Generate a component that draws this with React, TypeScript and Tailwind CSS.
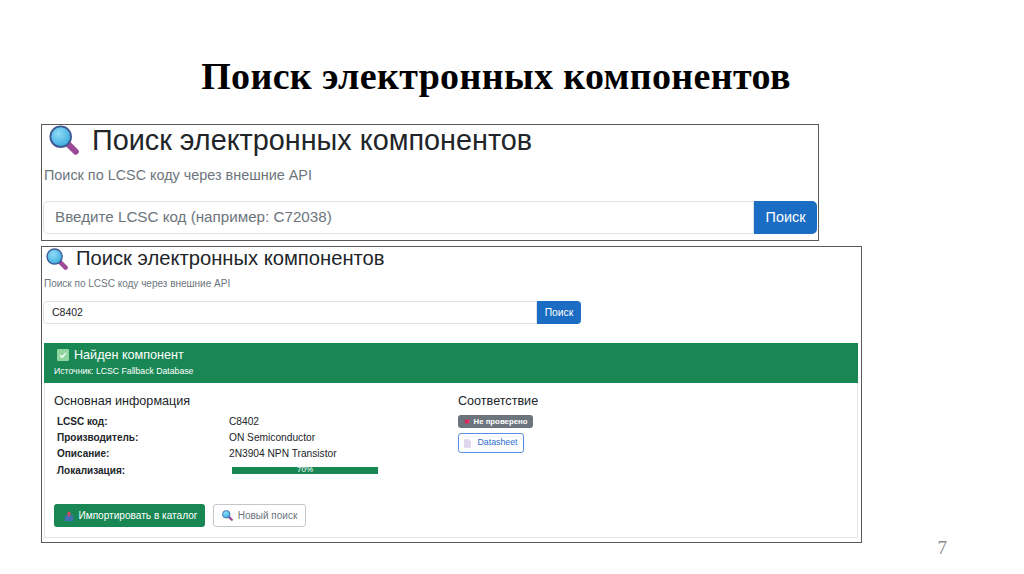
import React from 'react';

const sans = { fontFamily: '"Liberation Sans", Arial, sans-serif' };

const Magnifier: React.FC<{ className?: string }> = ({ className }) => (
  <svg viewBox="0 0 32 32" className={className}>
    <defs>
      <radialGradient id="lens" cx="40%" cy="35%" r="70%">
        <stop offset="0%" stopColor="#8fdcf5" />
        <stop offset="100%" stopColor="#38a9de" />
      </radialGradient>
    </defs>
    <line x1="20" y1="20" x2="28.5" y2="28.5" stroke="#9c4a97" strokeWidth="6.5" strokeLinecap="round" />
    <circle cx="12.5" cy="12.5" r="11" fill="url(#lens)" stroke="#3f5b94" strokeWidth="2" />
  </svg>
);

const InfoRow: React.FC<{ label: string; children: React.ReactNode }> = ({ label, children }) => (
  <div className="flex h-[16.3px] items-center">
    <div className="w-[172px] text-[10px] font-bold text-[#212529]">{label}</div>
    <div className="flex-1 text-[10.2px] text-[#212529]">{children}</div>
  </div>
);

export default function App() {
  return (
    <div className="relative h-[574px] w-[1024px] overflow-hidden bg-white" style={sans}>
      <h1
        className="flex h-[124px] items-center justify-center pr-[32px] pt-[28px] text-[38px] font-bold tracking-[0.35px] text-black"
        style={{ fontFamily: '"Liberation Serif", "Times New Roman", serif' }}
      >
        Поиск электронных компонентов
      </h1>

      <div className="ml-[41px] flex flex-col gap-[5px]">
        {/* First capture */}
        <div className="h-[117px] w-[778px] border border-[#5a5a5a] pl-[1px]">
          <div className="flex h-[33px] items-center pb-[3px] pl-[6px]">
            <Magnifier className="h-[30px] w-[30px]" />
            <span className="ml-[13px] text-[28.8px] leading-none text-[#212529]">Поиск электронных компонентов</span>
          </div>
          <p className="mt-[8px] pl-[1px] text-[14.4px] leading-[18px] text-[#6c757d]">Поиск по LCSC коду через внешние API</p>
          <div className="mt-[17px] flex h-[33px]">
            <div className="flex w-[711px] items-center rounded-l-[5px] border border-[#dee2e6] pl-[11px] text-[15.2px] text-[#6c757d]">
              Введите LCSC код (например: C72038)
            </div>
            <button className="w-[63px] rounded-r-[5px] bg-[#1a6dc2] text-[14.4px] text-white">Поиск</button>
          </div>
        </div>

        {/* Second capture */}
        <div className="h-[297px] w-[821px] border border-[#5a5a5a] pl-[1px]">
          <div className="flex h-[25px] items-center pb-[2px] pl-[3px]">
            <Magnifier className="h-[22px] w-[22px]" />
            <span className="ml-[8px] text-[20.2px] leading-none text-[#212529]">Поиск электронных компонентов</span>
          </div>
          <p className="mt-[5px] pl-[1px] text-[10px] leading-[14px] text-[#6c757d]">Поиск по LCSC коду через внешние API</p>
          <div className="mt-[10px] flex h-[23px]">
            <div className="flex w-[494px] items-center rounded-l-[4px] border border-[#dee2e6] pl-[8px] text-[10.5px] text-[#212529]">
              C8402
            </div>
            <button className="w-[44px] rounded-r-[4px] bg-[#1a6dc2] text-[10.3px] text-white">Поиск</button>
          </div>

          <div className="ml-px mt-[19px] h-[195px] w-[814px] border-x border-b border-[#e5e7eb]">
            <div className="-mx-px h-[40px] bg-[#198754] pl-[10px] pt-[4px] text-white">
              <div className="flex h-[16px] items-center pl-[3px] text-[12.6px] leading-none">
                <span className="mr-[5px] flex h-[12px] w-[12px] items-center justify-center rounded-[1px] bg-[#8fd6a0]">
                  <svg viewBox="0 0 12 12" className="h-[10px] w-[10px]">
                    <path d="M2.5 6.2 5 8.6 9.6 3.4" fill="none" stroke="#fff" strokeWidth="1.6" />
                  </svg>
                </span>
                Найден компонент
              </div>
              <div className="mt-[2px] text-[8.7px] leading-[12px]">Источник: LCSC Fallback Database</div>
            </div>

            <div className="flex pl-[9px] pt-[10px]">
              <div className="w-[404px]">
                <h5 className="text-[12.6px] leading-[16px] text-[#212529]">Основная информация</h5>
                <div className="mt-[4px] pl-[3px]">
                  <InfoRow label="LCSC код:">C8402</InfoRow>
                  <InfoRow label="Производитель:">ON Semiconductor</InfoRow>
                  <InfoRow label="Описание:">2N3904 NPN Transistor</InfoRow>
                  <InfoRow label="Локализация:">
                    <div className="ml-[3px] flex h-[7px] w-[146px] items-center justify-center bg-[#198754] text-[8px] leading-none text-white">
                      70%
                    </div>
                  </InfoRow>
                </div>
              </div>
              <div>
                <h5 className="text-[12.6px] leading-[16px] text-[#212529]">Соответствие</h5>
                <div className="mt-[6px] flex h-[13px] w-[75px] items-center justify-center rounded-[3px] bg-[#6c757d] text-[7.8px] font-bold leading-none text-white">
                  <span className="mr-[4px] text-[7px] text-[#e0245e]">✖</span>Не проверено
                </div>
                <div className="mt-[5px] flex h-[20px] w-[66px] items-center justify-center rounded-[3px] border border-[#5b8fe8] text-[8.8px] text-[#2f6bd0]">
                  <svg viewBox="0 0 10 12" className="mr-[6px] h-[9px] w-[7px]">
                    <path d="M0 0H7L10 3V12H0Z" fill="#ddd6ec" />
                  </svg>
                  Datasheet
                </div>
              </div>
            </div>

            <div className="mt-[26px] flex gap-[8px] pl-[9px]">
              <button className="flex h-[23px] w-[151px] items-center justify-center rounded-[3px] bg-[#198754] pl-[3px] text-[10.1px] text-white">
                <svg viewBox="0 0 12 12" className="mr-[4px] h-[10px] w-[10px]">
                  <rect x="1" y="5" width="10" height="7" fill="#3f6fb5" />
                  <path d="M6 0 9 4H3Z" fill="#d9486e" />
                  <rect x="5" y="3" width="2" height="4" fill="#d9486e" />
                </svg>
                Импортировать в каталог
              </button>
              <button className="flex h-[23px] w-[93px] items-center justify-center rounded-[3px] border border-[#c4c8cc] text-[10px] text-[#6c757d]">
                <Magnifier className="mr-[5px] h-[11px] w-[11px]" />
                Новый поиск
              </button>
            </div>
          </div>
        </div>
      </div>

      <div className="mt-[-6px] pr-[77px] text-right text-[19px] leading-[22px] text-[#8a8a8a]" style={{ fontFamily: '"Liberation Serif", serif' }}>
        7
      </div>
    </div>
  );
}
